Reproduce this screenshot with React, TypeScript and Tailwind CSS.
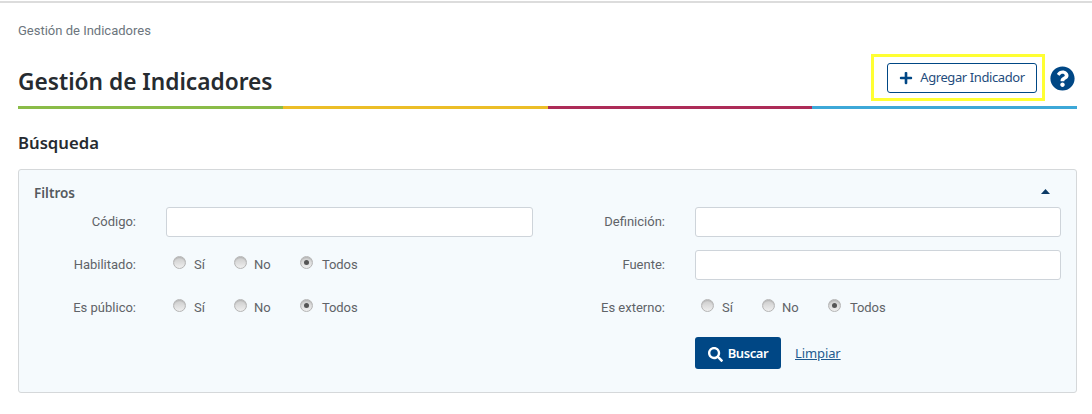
import React from 'react';
import { FaPlus, FaQuestionCircle, FaSearch } from 'react-icons/fa';

const RadioDot: React.FC<{ checked?: boolean }> = ({ checked }) => (
  <span className="flex h-[13px] w-[13px] shrink-0 items-center justify-center rounded-full border border-[#b5b5b5] bg-gradient-to-b from-[#cbcbcb] to-[#efefef] shadow-[inset_0_1px_1px_rgba(0,0,0,0.12)]">
    {checked && <span className="h-[5px] w-[5px] rounded-full bg-[#555]" />}
  </span>
);

const RadioGroup: React.FC<{ className?: string }> = ({ className = 'pl-[7px]' }) => (
  <div className={`-mt-[1px] flex h-[30px] items-center text-[13px] text-[#5f6368] ${className}`}>
    <div className="flex w-[61px] items-center">
      <span className="-mt-[5px]"><RadioDot /></span>
      <span className="ml-[8px]">Sí</span>
    </div>
    <div className="flex w-[66px] items-center">
      <span className="-mt-[5px]"><RadioDot /></span>
      <span className="ml-[7px]">No</span>
    </div>
    <div className="flex items-center">
      <span className="-mt-[5px]"><RadioDot checked /></span>
      <span className="ml-[9px] tracking-[-0.1px]">Todos</span>
    </div>
  </div>
);

const Field: React.FC<{ label: string; children: React.ReactNode }> = ({ label, children }) => (
  <div className="flex h-[30px] items-center">
    <label className="w-[102px] shrink-0 text-right text-[13px] text-[#5f6368]">{label}</label>
    <div className="ml-[30px] flex-1">{children}</div>
  </div>
);

const TextBox: React.FC = () => (
  <input type="text" className="block h-[30px] w-full rounded-[3px] border border-[#ced4da] bg-white" />
);

export default function App() {
  const sans = { fontFamily: '"Noto Sans", sans-serif' };
  return (
    <div className="mt-[1px] min-h-[413px] overflow-hidden border-t-2 border-t-[#dcdcdc] bg-white font-['Roboto',sans-serif]">
      <div className="pl-[18px] pr-[15px]">
        <div className="pt-[20px] text-[13px] leading-[15px] text-[#6c757d]">Gestión de Indicadores</div>

        <div className="mt-[16px] flex h-[52px] items-stretch">
          <h1 style={sans} className="mt-[12px] flex-1 text-[22.7px] font-semibold leading-[32px] text-[#262b30]">
            Gestión de Indicadores
          </h1>
          <div className="flex h-[47px] items-center border-[3px] border-[#ffff33] pl-[13px] pr-[5px]">
            <button style={sans} className="flex h-[30px] w-[150px] items-center justify-center rounded-[3px] border border-[#004785] bg-white text-[13px] tracking-[-0.4px] text-[#1f4d7d]">
              <FaPlus className="mr-[7px] h-[14px] w-[14px] text-[#004785]" />
              Agregar Indicador
            </button>
          </div>
          <FaQuestionCircle className="ml-[5px] mt-[12px] h-[25px] w-[25px] text-[#004785]" />
          <div className="w-[2px]" />
        </div>

        <div className="flex h-[3px]">
          <div className="flex-1 bg-[#8abc48]" />
          <div className="flex-1 bg-[#ecbe28]" />
          <div className="flex-1 bg-[#ad2c58]" />
          <div className="flex-1 bg-[#3da8d8]" />
        </div>

        <h2 style={sans} className="mt-[22px] text-[16.7px] font-semibold leading-[24px] text-[#262b30]">Búsqueda</h2>

        <section className="mt-[14px] h-[224px] rounded-[3px] border border-[#d5d8da] bg-[#f5fafd] pl-[15px] pr-[15px]">
          <div className="flex h-[37px] items-start justify-between">
            <span style={sans} className="mt-[15px] text-[13.5px] font-semibold leading-[17px] text-[#555b60]">Filtros</span>
            <svg className="mr-[11px] mt-[19px]" width="9" height="5" viewBox="0 0 9 5">
              <path d="M4.5 0 L9 5 L0 5 Z" fill="#0b3a66" />
            </svg>
          </div>
          <div className="grid grid-cols-[499px_498px] gap-x-[30px] gap-y-[13px]">
            <Field label="Código:"><TextBox /></Field>
            <Field label="Definición:"><TextBox /></Field>
            <Field label="Habilitado:"><RadioGroup /></Field>
            <Field label="Fuente:"><TextBox /></Field>
            <Field label="Es público:"><RadioGroup /></Field>
            <Field label="Es externo:"><RadioGroup className="pl-[6px]" /></Field>
            <div />
            <div className="flex items-center pl-[132px] pt-[1px]">
              <button style={sans} className="flex h-[32px] w-[86px] items-center justify-center rounded-[3px] bg-[#004785] pt-[2px] text-[13px] font-semibold tracking-[-0.4px] text-white">
                <FaSearch className="mr-[5px] h-[15px] w-[15px]" />
                Buscar
              </button>
              <a style={sans} href="#" className="ml-[14px] mt-[2px] text-[13px] tracking-[-0.1px] text-[#1f5a8f] underline">Limpiar</a>
            </div>
          </div>
        </section>
      </div>
    </div>
  );
}
